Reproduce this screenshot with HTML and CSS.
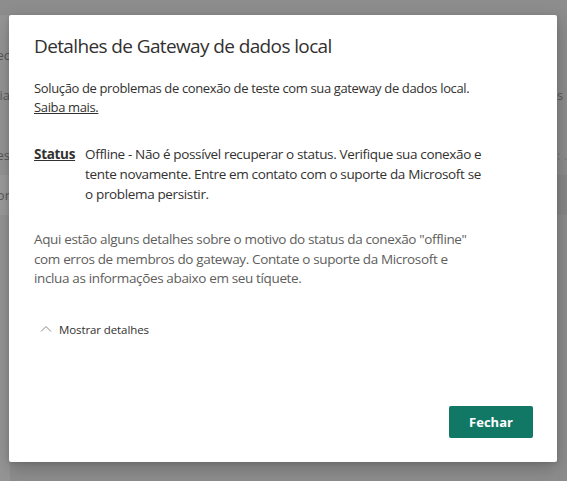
FILE: index.html
```html
<!DOCTYPE html>
<html lang="pt">
<head>
<meta charset="utf-8">
<title>Detalhes de Gateway de dados local</title>
<link rel="stylesheet" href="styles.css">
</head>
<body>
<div class="page">
  <div class="bg-col bg-left">
    <div class="bg-row r1"><span>Conec</span></div>
    <div class="bg-row r2"><span>Licencia</span></div>
    <div class="bg-row r3"><span>Opções</span></div>
    <div class="bg-row r4 band"><span>Servidor</span></div>
  </div>
  <div class="bg-col bg-right">
    <div class="bg-row r1"></div>
    <div class="bg-row r2 start"><span>s L</span></div>
    <div class="bg-row r3 start"><span class="dim">: .</span></div>
    <div class="bg-row r4 band"></div>
  </div>
</div>

<div class="dialog" role="dialog" aria-labelledby="dlg-title">
  <h1 class="title" id="dlg-title">Detalhes de Gateway de dados local</h1>
  <p class="intro">Solução de problemas de conexão de teste com sua gateway de dados local.<br><a class="link" href="#">Saiba mais.</a></p>

  <div class="status">
    <span class="status-label">Status</span>
    <span class="status-value">Offline - Não é possível recuperar o status. Verifique sua conexão e tente novamente. Entre em contato com o suporte da Microsoft se o problema persistir.</span>
  </div>

  <p class="details">Aqui estão alguns detalhes sobre o motivo do status da conexão "offline" com erros de membros do gateway. Contate o suporte da Microsoft e inclua as informações abaixo em seu tíquete.</p>

  <button class="toggle" type="button">
    <svg class="chev" width="12" height="8" viewBox="0 0 12 8" aria-hidden="true"><path d="M1 6.5 L6 1.5 L11 6.5" fill="none" stroke="#8a8886" stroke-width="1"/></svg>
    <span>Mostrar detalhes</span>
  </button>

  <div class="footer">
    <button class="primary" type="button">Fechar</button>
  </div>
</div>
</body>
</html>
```

FILE: styles.css
```css
html, body {
  margin: 0;
  padding: 0;
  height: 100%;
}
body {
  background: #8d8d8d;
  font-family: "Open Sans", "Noto Sans", sans-serif;
  overflow: hidden;
  position: relative;
}
.page {
  display: flex;
  justify-content: space-between;
  height: 100%;
  padding-top: 15px;
  box-sizing: border-box;
}
.bg-col {
  width: 10px;
  display: flex;
  flex-direction: column;
  background: #959595;
}
.bg-right {
  background: #8c8c8c;
}
.bg-row {
  display: flex;
  justify-content: flex-end;
  align-items: center;
  overflow: hidden;
  white-space: nowrap;
  font-size: 13px;
  color: #5a5a5a;
  height: 40px;
  flex: none;
}
.bg-row.start { justify-content: flex-start; }
.r1 { margin-top: 20px; }
.r3 { margin-top: 20px; }
.bg-left .band { background: #9c9c9c; }
.bg-right .band { background: #868686; }
.dim { color: #7a7a7a; }

.dialog {
  position: absolute;
  left: 9px;
  top: 15px;
  width: 548px;
  height: 447px;
  box-sizing: border-box;
  background: #ffffff;
  border-radius: 2px;
  box-shadow: 0 6px 18px rgba(0,0,0,0.22), 0 1px 4px rgba(0,0,0,0.12);
  padding: 17px 24px 24px 25px;
  display: flex;
  flex-direction: column;
  color: #323130;
}
.title {
  margin: 0;
  font-size: 19px;
  font-weight: 500;
  letter-spacing: -0.62px;
  line-height: 28px;
  color: #323130;
}
.intro {
  margin: 19px 0 0;
  font-size: 13px;
  letter-spacing: -0.36px;
  line-height: 19px;
}
.link {
  color: #323130;
  text-decoration: underline;
}
.status {
  display: flex;
  gap: 10px;
  margin-top: 27px;
  font-size: 13.5px;
  line-height: 20px;
}
.status-label {
  font-weight: 700;
  text-decoration: underline;
  letter-spacing: -0.3px;
  flex: none;
}
.status-value {
  max-width: 402px;
  letter-spacing: -0.36px;
}
.details {
  margin: 26px 0 0;
  font-size: 13.5px;
  letter-spacing: -0.36px;
  line-height: 19.5px;
  color: #605e5c;
  max-width: 450px;
}
.toggle {
  margin-top: 33px;
  align-self: flex-start;
  background: none;
  border: 0;
  padding: 0 0 0 6px;
  display: flex;
  align-items: center;
  gap: 7px;
  font-family: inherit;
  font-size: 11.5px;
  letter-spacing: -0.1px;
  color: #323130;
  cursor: pointer;
}
.footer {
  margin-top: auto;
  display: flex;
  justify-content: flex-end;
}
.primary {
  width: 84px;
  height: 32px;
  border: 0;
  border-radius: 2px;
  background: #117865;
  color: #ffffff;
  font-family: inherit;
  font-size: 13px;
  font-weight: 700;
  cursor: pointer;
}
```
